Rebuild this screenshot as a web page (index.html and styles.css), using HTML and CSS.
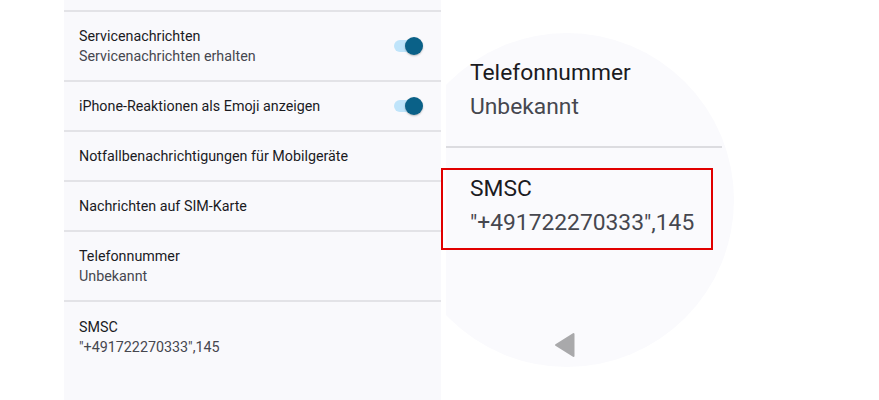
FILE: index.html
```html
<!DOCTYPE html>
<html lang="de">
<head>
<meta charset="utf-8">
<title>Einstellungen</title>
<link rel="stylesheet" href="styles.css">
</head>
<body>
<div class="page">
  <section class="list">
    <div class="stub"></div>
    <div class="row row-tall">
      <div class="texts">
        <div class="title">Servicenachrichten</div>
        <div class="sub">Servicenachrichten erhalten</div>
      </div>
      <div class="toggle"><span class="track"></span><span class="thumb"></span></div>
    </div>
    <div class="row">
      <div class="texts">
        <div class="title">iPhone-Reaktionen als Emoji anzeigen</div>
      </div>
      <div class="toggle"><span class="track"></span><span class="thumb"></span></div>
    </div>
    <div class="row">
      <div class="texts"><div class="title">Notfallbenachrichtigungen für Mobilgeräte</div></div>
    </div>
    <div class="row">
      <div class="texts"><div class="title">Nachrichten auf SIM-Karte</div></div>
    </div>
    <div class="row row-tall">
      <div class="texts">
        <div class="title">Telefonnummer</div>
        <div class="sub">Unbekannt</div>
      </div>
    </div>
    <div class="row row-last">
      <div class="texts">
        <div class="title">SMSC</div>
        <div class="sub">"+491722270333",145</div>
      </div>
    </div>
  </section>
  <section class="magnifier">
    <div class="lens">
      <div class="zitem">
        <div class="ztitle">Telefonnummer</div>
        <div class="zsub">Unbekannt</div>
      </div>
      <div class="zsep"></div>
      <div class="zitem zitem-smsc">
        <div class="ztitle">SMSC</div>
        <div class="zsub">"+491722270333",145</div>
      </div>
      <div class="back">
        <svg width="22" height="26" viewBox="0 0 22 26"><polygon points="19.5,2 19.5,24 2,13" fill="#a9a9ab" stroke="#a9a9ab" stroke-width="2" stroke-linejoin="round"/></svg>
      </div>
    </div>
    <div class="highlight"></div>
  </section>
</div>
</body>
</html>
```
FILE: styles.css
```css
html, body {
  margin: 0;
  padding: 0;
  background: #ffffff;
}
body {
  font-family: Roboto, "Noto Sans", sans-serif;
  color: #1b1b1f;
}
.page {
  display: flex;
  width: 879px;
  height: 400px;
  overflow: hidden;
  padding-left: 64px;
  box-sizing: border-box;
}
.list {
  width: 377px;
  flex: none;
  background: #f9f9fc;
  display: flex;
  flex-direction: column;
}
.stub {
  height: 10px;
  flex: none;
}
.row {
  flex: none;
  height: 50px;
  box-sizing: border-box;
  border-top: 2px solid #e3e3e7;
  display: flex;
  align-items: center;
  padding: 0 18px 0 15px;
}
.row-tall {
  height: 70px;
}
.row-last {
  flex: 1;
  align-items: flex-start;
  padding-top: 15px;
}
.texts {
  flex: 1;
}
.title {
  font-size: 14.3px;
  line-height: 20px;
  color: #1b1b1f;
}
.sub {
  font-size: 14.3px;
  line-height: 20px;
  color: #46474f;
}
.toggle {
  position: relative;
  width: 29px;
  height: 18px;
  flex: none;
}
.track {
  position: absolute;
  left: 0;
  top: 3px;
  width: 26px;
  height: 12px;
  border-radius: 6px;
  background: #bfe4fa;
}
.thumb {
  position: absolute;
  right: 0;
  top: 0;
  width: 18px;
  height: 18px;
  border-radius: 50%;
  background: #0a6188;
  box-shadow: 0 1px 2px rgba(0, 0, 0, 0.25);
}
.magnifier {
  position: relative;
  width: 300px;
  flex: none;
  padding-left: 5px;
}
.lens {
  position: relative;
  height: 400px;
  overflow: hidden;
  z-index: 0;
}
.lens::before {
  content: "";
  position: absolute;
  left: -46px;
  top: 33px;
  width: 334px;
  height: 334px;
  border-radius: 50%;
  background: #fafafd;
  z-index: -1;
}
.zitem {
  padding: 56px 0 0 24px;
}
.zitem-smsc {
  padding-top: 24px;
}
.ztitle {
  font-size: 22.8px;
  line-height: 34px;
  color: #1b1b1f;
}
.zsub {
  font-size: 22.8px;
  line-height: 34px;
  color: #46474f;
}
.zsep {
  margin-top: 22px;
  width: 276px;
  height: 2px;
  background: #dcdce0;
}
.back {
  margin: 92px 0 0 108px;
  width: 22px;
  height: 26px;
}
.back svg {
  display: block;
}
.highlight {
  position: absolute;
  left: 0;
  top: 168px;
  width: 272px;
  height: 82px;
  box-sizing: border-box;
  border: 2px solid #e10000;
}
```
